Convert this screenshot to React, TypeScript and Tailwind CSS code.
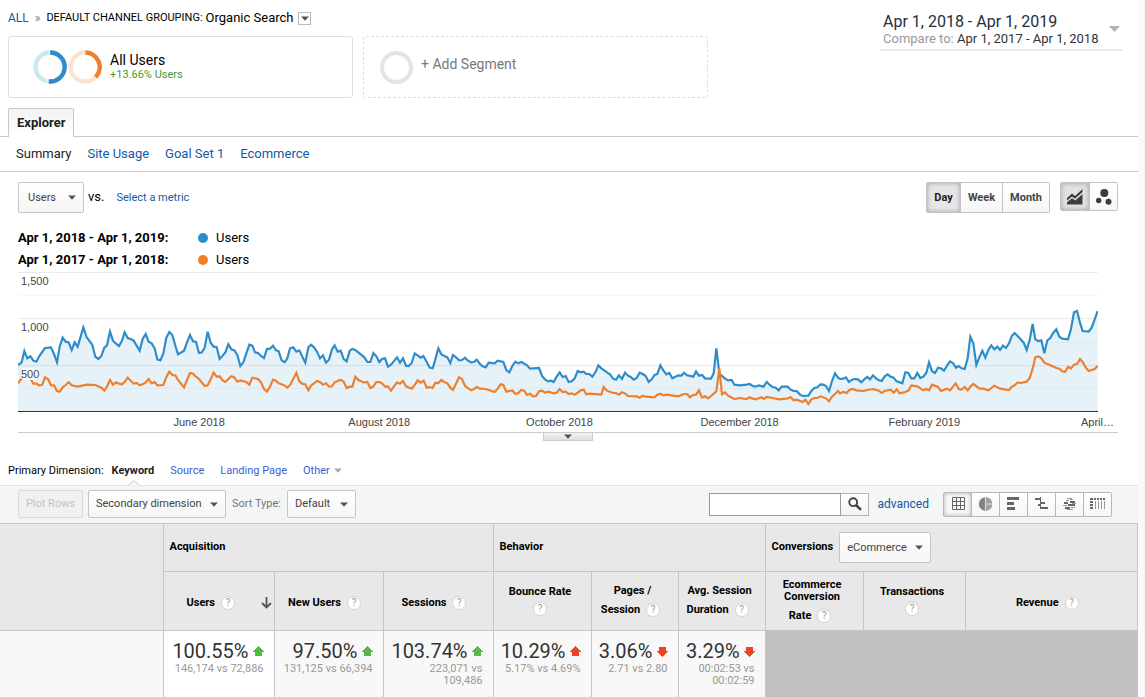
import type { ReactNode } from "react";

type Segment = { dx: number; dy: number; points: string };

/* Coordinates are in thirds of a pixel; each segment is relative to its own origin. */
const currentYear: Segment[] = [
  {
    dx: 0,
    dy: 660,
    points:
      "54,435 65,427 73,393 82,415 91,409 100,422 109,425 118,408 135,384 153,382 162,402 171,427 179,380 188,353 197,365 206,367 215,390 224,367 233,380 242,350 250,322 260,352 268,362 277,375 286,410 295,417 304,408 313,383 321,376 330,335 339,362 348,371 357,378 366,362 374,337 383,354 392,357 401,362 410,377 419,392 428,357 437,342 446,365 455,370 464,385 472,418 481,421 490,400 499,353 508,336 517,345 526,377 534,403 552,392 561,367 570,345 579,364 588,366 597,399 606,397 614,383 623,335 632,368 641,380 650,381 659,417 668,407 676,397 685,373 694,388 703,391 712,405 721,438 730,427 739,400 748,374 757,377 765,397 774,399 783,408 792,414 801,387 810,386 819,377 828,391 836,394 845,421 854,427 862,415",
  },
  {
    dx: 840,
    dy: 780,
    points:
      "30,265 40,262 49,275 58,271 67,290 76,308 85,262 93,254 102,262 111,275 120,295 129,286 138,308 147,299 156,268 164,256 173,275 182,272 191,297 200,304 209,273 217,267 226,270 235,277 253,292 262,306 271,306 280,279 289,289 298,306 306,297 315,295 324,320 333,314 351,292 360,308 369,295 378,317 386,318 395,309 404,280 413,286 422,293 430,288 440,305 449,323 458,325 466,298 475,265 484,283 493,288 502,292 511,309 519,285 528,292 537,301 546,300 555,293 564,302 573,307 582,306 590,299 600,312 608,319 617,322 626,308 644,310 653,302 670,306 679,330 688,337 697,318 706,305 715,310 724,306 741,316 750,326 777,324 786,348 795,358 804,364 813,362 821,366 830,350 839,337 848,351 857,348",
  },
  {
    dx: 1680,
    dy: 780,
    points:
      "26,366 35,364 44,355 53,333 62,337 71,335 79,342 88,342 97,350 106,337 115,316 124,325 133,331 142,338 150,343 159,356 168,359 177,346 186,357 195,338 204,347 212,351 221,359 230,354 239,338 248,342 257,348 266,366 275,358 284,345 292,342 301,316 310,331 319,343 328,339 337,355 355,346 364,347 372,338 381,346 400,350 408,334 417,347 426,345 435,355 453,356 461,340 469,265 478,340 486,348 495,356 504,361 515,360 523,374 540,376 560,374 569,372 578,378 587,380 596,376 611,380 620,366 629,375 638,381 647,383 656,391 665,380 683,380 692,389 701,393 710,393 719,403 728,408 745,407 754,393 763,384 772,382 781,373 790,374 798,378 807,393 816,363 825,340 834,353",
  },
  {
    dx: 2520,
    dy: 780,
    points:
      "0,357 10,356 18,352 27,366 36,359 45,357 54,358 64,367 73,358 82,351 90,358 99,346 108,355 117,361 125,363 134,349 143,343 152,350 161,353 170,364 187,370 196,337 205,339 214,355 223,355 232,339 241,354 250,350 259,338 267,307 276,334 285,339 294,323 303,325 312,332 321,317 330,304 339,309 348,323 356,318 365,325 374,327 383,295 391,230 400,250 409,315 418,292 427,272 436,293 445,270 454,256 463,268 472,260 480,270 489,257 498,264 507,250 516,227 524,219 542,238 551,248 560,270 569,240 578,192 586,238 595,243 604,241 613,280 622,241 631,234 640,218 649,208 658,230 667,236 684,238 693,207 702,157 711,153 720,188 728,213 746,215 755,203 764,178 773,153",
  },
];

const previousYear: Segment[] = [
  {
    dx: 0,
    dy: 660,
    points:
      "54,490 65,475 73,462 82,460 91,475 100,491 109,491 118,497 127,494 135,472 144,477 153,496 162,496 171,513 179,515 188,502 197,495 206,487 215,496 233,500 260,494 286,495 304,503 313,512 321,500 330,480 339,494 348,487 357,491 366,493 374,485 383,473 401,491 410,489 419,496 428,493 437,487 446,477 455,490 464,486 472,496 490,495 499,471 508,455 517,465 526,466 534,480 552,502 561,480 570,459 579,461 588,470 597,477 614,498 623,496 632,478 641,458 650,470 659,469 668,481 676,486 694,469 703,472 712,485 721,481 739,486 748,494 757,473 774,477 783,487 792,507 801,515 810,500 819,479 828,482 836,490",
  },
  {
    dx: 840,
    dy: 780,
    points:
      "0,371 13,376 22,383 31,374 40,356 49,338 58,364 67,371 76,373 85,391 93,377 111,363 120,366 129,374 138,370 147,380 156,379 164,367 182,359 191,365 200,384 209,380 217,380 226,350 235,360 253,368 262,366 271,384 280,380 289,366 298,366 306,370 315,380 324,379 333,392 342,379 351,367 360,371 369,363 378,379 395,386 404,375 413,361 422,368 431,362 440,383 449,381 458,384 466,368 475,369 484,360 493,366 502,370 511,383 519,390 537,352 546,357 555,378 573,391 582,387 590,381 600,386 617,387 644,396 653,386 662,373 670,375 679,395 697,391 706,402 715,399 724,390 733,393 741,405 750,401 759,409 768,408 777,394 786,392 795,398 804,395 821,400 830,398 839,387 848,396 857,395",
  },
  {
    dx: 1680,
    dy: 780,
    points:
      "26,402 35,400 44,404 53,398 62,391 71,389 79,403 88,401 124,404 131,381 141,392 159,399 168,399 177,404 186,397 195,400 204,408 230,409 239,413 248,407 257,410 284,412 292,404 301,401 310,406 319,404 355,409 372,402 381,402 390,412 399,405 408,404 417,391 426,413 435,409 444,415 453,408 469,394 478,325 486,403 495,397 504,407 523,417 540,414 560,417 569,412 578,416 587,418 605,412 611,417 620,411 638,414 656,418 683,415 692,412 701,421 710,419 728,426 736,419 745,432 754,418 763,414 772,414 781,409 798,415 807,424 816,410 834,393",
  },
  {
    dx: 2520,
    dy: 780,
    points:
      "0,400 10,396 20,399 28,390 37,387 54,392 72,393 81,390 99,387 117,392 125,399 134,393 152,389 161,398 170,388 179,400 196,396 206,391 214,376 232,379 250,391 259,387 267,391 276,374 294,381 303,393 321,386 330,391 347,370 356,387 365,389 374,381 383,391 392,379 400,372 418,386 430,386 445,391 463,377 480,386 507,390 516,380 524,376 533,367 542,369 560,365 569,354 578,326 586,292 595,289 604,295 613,308 631,316 649,324 658,326 667,334 675,336 684,321 693,325 702,314 711,312 720,297 728,306 737,322 746,333 755,330 764,327 773,317",
  },
];

const joinSegments = (segments: Segment[]) =>
  segments
    .flatMap(({ dx, dy, points }) =>
      points.split(" ").map((pair) => {
        const [x, y] = pair.split(",").map(Number);
        return `${x + dx},${y + dy}`;
      }),
    )
    .join(" ");

const currentLine = joinSegments(currentYear);
const previousLine = joinSegments(previousYear);

function Caret({ className = "text-[#555]" }: { className?: string }) {
  return (
    <svg width="8" height="5" viewBox="0 0 8 5" className={className} aria-hidden="true">
      <path d="M0 0.5h8L4 4.8z" fill="currentColor" />
    </svg>
  );
}

function DropDown({ label, value, className }: { label: string; value: string; className: string }) {
  return (
    <div className={`relative ${className}`}>
      <select
        aria-label={label}
        className="h-full w-full appearance-none rounded-[2px] border border-[#c6c6c6] bg-gradient-to-b from-white to-[#f5f5f5] pr-5 text-[11px] text-[#444] outline-none"
      >
        <option>{value}</option>
      </select>
      <span className="pointer-events-none absolute inset-y-0 right-2 flex items-center">
        <Caret />
      </span>
    </div>
  );
}

function Help() {
  return (
    <button
      type="button"
      aria-label="Help"
      className="inline-flex size-[14px] shrink-0 items-center justify-center rounded-full border border-[#d4d4d4] bg-white text-[10px] leading-[12px] font-normal text-[#999]"
    >
      ?
    </button>
  );
}

function TrendArrow({ down, good }: { down?: boolean; good?: boolean }) {
  return (
    <svg
      width="11"
      height="11"
      viewBox="0 0 11 11"
      shapeRendering="crispEdges"
      className={good ? "text-[#56b947]" : "text-[#ef4423]"}
      aria-hidden="true"
    >
      <path
        d={down ? "M5.5 11L0 6V5H2V1H9V5H11V6z" : "M5.5 0L0 5V6H2V10H9V6H11V5z"}
        fill="currentColor"
      />
    </svg>
  );
}

function ViewButton({ label, active, children }: { label: string; active?: boolean; children: ReactNode }) {
  return (
    <button
      type="button"
      aria-label={label}
      className={`flex h-full w-7 items-center justify-center border-l border-[#b8b8b8] first:w-[27px] first:border-l-0 ${
        active ? "bg-[#f8f8f8] shadow-[inset_0_0_4px_rgba(0,0,0,0.3)]" : "bg-gradient-to-b from-white to-[#f6f6f6]"
      }`}
    >
      <svg width="16" height="14" viewBox="0 0 16 14" className="text-[#666]" fill="currentColor" aria-hidden="true">
        {children}
      </svg>
    </button>
  );
}

function Chart() {
  return (
    <div className="mx-[18px] mr-5">
      <div className="relative mr-5 h-[140px]">
        <svg
          className="block h-full w-full"
          viewBox="54 816 3240 420"
          preserveAspectRatio="none"
          role="img"
          aria-label="Users per day"
        >
          <g fill="#ebebeb">
            <rect x="54" y="816" width="3240" height="3" />
            <rect x="54" y="954" width="3240" height="3" />
            <rect x="54" y="1095" width="3240" height="3" />
          </g>
          <g fill="#f7f7f7">
            <rect x="54" y="885" width="3240" height="3" />
            <rect x="54" y="1026" width="3240" height="3" />
            <rect x="54" y="1164" width="3240" height="3" />
          </g>
          <polygon points={`54,1233 ${currentLine} 3293,1233`} fill="#0a83bd" fillOpacity="0.1" />
          <polyline points={currentLine} fill="none" stroke="#2d8cc9" strokeWidth="6.5" />
          <polyline points={previousLine} fill="none" stroke="#ee7f2d" strokeWidth="6.5" />
          <rect x="54" y="1233" width="3240" height="3" fill="#333" />
        </svg>
        <div className="absolute inset-y-0 left-[3px] font-['Liberation_Sans',sans-serif] text-[11px] leading-[12px] text-[#444] [text-shadow:0_0_2px_#fff,0_0_2px_#fff]">
          <div className="absolute top-[3px]">1,500</div>
          <div className="absolute top-[49px]">1,000</div>
          <div className="absolute top-[96px] rounded-sm bg-white/80">500</div>
        </div>
      </div>
      <div className="grid grid-cols-[20fr_20fr_20fr_20fr_21fr_11fr] border-b border-[#ccc] pl-[91px] text-center font-['Liberation_Sans',sans-serif] text-[11px] leading-[20px] text-[#444]">
        <span>June 2018</span>
        <span>August 2018</span>
        <span>October 2018</span>
        <span>December 2018</span>
        <span>February 2019</span>
        <span className="pr-1 text-right">April…</span>
      </div>
      <button
        type="button"
        aria-label="Collapse chart"
        className="mx-auto flex h-2 w-[50px] items-center justify-center border border-t-0 border-[#ccc] bg-gradient-to-b from-[#f2f2f2] to-[#ddd]"
      >
        <Caret />
      </button>
    </div>
  );
}

const th = "border border-[#c6c6c6] align-middle font-bold";

function Metric({ value, note, down, good, white }: { value: string; note: ReactNode; down?: boolean; good?: boolean; white?: boolean }) {
  return (
    <td className={`border-x border-[#c6c6c6] pt-[9px] pr-[10px] text-right align-top ${white ? "bg-white" : "bg-[#f8f8f8]"}`}>
      <div className="flex items-center justify-end gap-1 text-[20px] leading-[23px] whitespace-nowrap text-[#333]">
        {value}
        <TrendArrow down={down} good={good} />
      </div>
      <div className="text-[11px] leading-[12px] text-[#999]">{note}</div>
    </td>
  );
}

export default function App() {
  return (
    <div className="min-h-screen bg-[#f8faf9] pr-[7px] font-[Roboto,sans-serif] text-black">
      <main className="min-h-screen bg-white">
        <header className="flex items-start justify-between pl-2">
          <div>
            <nav className="flex h-9 items-center text-[11px]" aria-label="Breadcrumb">
              <a href="#all" className="text-[12px] text-[#15599f]">ALL</a>
              <span className="mx-[6px] text-[12px] text-[#777]">»</span>
              <span>DEFAULT CHANNEL GROUPING:</span>
              <span className="ml-[3px] text-[13px]">Organic Search</span>
              <button type="button" aria-label="Change channel" className="ml-[5px] flex size-[13px] items-center justify-center border border-[#bbb]">
                <Caret />
              </button>
            </nav>
            <div className="flex gap-[10px]">
              <section className="flex h-[62px] w-[345px] items-center rounded-[3px] border border-[#e0e0e0] pl-6">
                <svg width="69" height="34" viewBox="0 0 69 34" fill="none" strokeWidth="4.4" aria-hidden="true">
                  <circle cx="17" cy="17" r="14.5" stroke="#cde6f4" />
                  <path d="M17 2.5A14.5 14.5 0 1 1 15.5 31.4" stroke="#2d8cc9" />
                  <path d="M16.6 0V5M15 29V34" stroke="#fff" strokeWidth="1" />
                  <circle cx="52" cy="17" r="14.5" stroke="#fce3d0" />
                  <path d="M52.5 2.5A14.5 14.5 0 0 1 62.7 27" stroke="#ee7f2d" />
                </svg>
                <div className="ml-2 pb-px">
                  <h2 className="text-[14px] leading-[16px]">All Users</h2>
                  <p className="text-[11px] leading-[14px] text-[#449a2f]">+13.66% Users</p>
                </div>
              </section>
              <button type="button" className="flex h-[62px] w-[345px] items-center gap-2 rounded-[3px] border border-dashed border-[#dedede] pl-4 text-[14px] text-[#777]">
                <span className="size-[33px] rounded-full border-4 border-[#e4e4e4]" />
                <span className="pb-[6px]">+ Add Segment</span>
              </button>
            </div>
          </div>
          <button type="button" className="mt-3 mr-4 flex w-[242px] items-center justify-between border-b-2 border-[#ebebeb] pr-[2px] pb-[3px] pl-[3px] text-left">
            <span>
              <span className="block text-[16px] leading-[19px] text-[#1f2f40]">Apr 1, 2018 - Apr 1, 2019</span>
              <span className="block text-[13px] leading-[15px] text-[#333]">
                <span className="text-[#999]">Compare to:</span> Apr 1, 2017 - Apr 1, 2018
              </span>
            </span>
            <svg width="11" height="6" viewBox="0 0 11 6" aria-hidden="true">
              <path d="M0 0h11L5.5 6z" fill="#b3b3b3" />
            </svg>
          </button>
        </header>

        <div className="mt-[10px] flex border-b border-[#c9c9c9] pl-2">
          <button type="button" className="-mb-px h-[29px] rounded-t-[2px] border border-b-0 border-[#c9c9c9] bg-gradient-to-b from-[#f3f3f3] to-white px-2 text-[13px] font-bold text-[#222]">
            Explorer
          </button>
        </div>
        <nav className="flex h-[35px] items-center gap-4 border-b border-[#c9c9c9] px-4 text-[13px] text-[#15599f]" aria-label="Explorer views">
          <span className="text-[#222]">Summary</span>
          <a href="#usage">Site Usage</a>
          <a href="#goals">Goal Set 1</a>
          <a href="#ecommerce">Ecommerce</a>
        </nav>

        <div className="flex items-center justify-between pt-[10px] pr-5 pl-[18px]">
          <div className="flex items-center">
            <DropDown label="Metric" value="Users" className="h-[31px] w-[66px] [&>select]:pt-px [&>select]:pl-[9px]" />
            <span className="ml-1 pb-[2px] text-[13px]">vs.</span>
            <a href="#metric" className="ml-3 pt-px text-[11px] text-[#15599f]">Select a metric</a>
          </div>
          <div className="flex items-start gap-[10px]">
            <div className="flex h-[31px] overflow-hidden rounded-[2px] border border-[#c3c3c3] text-[11px] font-bold text-[#444]">
              <button type="button" className="w-[33px] bg-[#e6e6e6] pt-px text-[#222] shadow-[inset_0_0_5px_rgba(0,0,0,0.3)]">Day</button>
              <button type="button" className="w-[42px] border-l border-[#c3c3c3] bg-gradient-to-b from-white to-[#f6f6f6] pt-px">Week</button>
              <button type="button" className="w-[47px] border-l border-[#c3c3c3] bg-gradient-to-b from-white to-[#f6f6f6] pt-px">Month</button>
            </div>
            <div className="flex h-[29px] overflow-hidden rounded-[2px] border border-[#c3c3c3]">
              <button type="button" aria-label="Line chart" className="flex w-7 items-center justify-center bg-[#e2e2e2] shadow-[inset_0_0_5px_rgba(0,0,0,0.3)]">
                <svg width="16" height="16" viewBox="0 0 16 16" aria-hidden="true">
                  <path d="M0 9L5 4.5L8 7L15.5 0V3L8 9.8L5 7.5L0 11.5z" fill="#3c3c3c" />
                  <path d="M0 13.2L5 9.3L8.3 11.5L15.5 5V15.5H0z" fill="#3c3c3c" />
                </svg>
              </button>
              <button type="button" aria-label="Motion chart" className="flex w-7 items-center justify-center border-l border-[#c3c3c3] bg-gradient-to-b from-white to-[#f6f6f6]">
                <svg width="16" height="16" viewBox="0 0 16 16" fill="#3c3c3c" aria-hidden="true">
                  <circle cx="8.3" cy="4" r="4" />
                  <circle cx="2.7" cy="11.5" r="2.7" />
                  <circle cx="12.5" cy="12.7" r="3" />
                </svg>
              </button>
            </div>
          </div>
        </div>

        <div className="mt-[14px] mb-[1px] grid grid-cols-[180px_1fr] pl-[18px] text-[13px] leading-[22px]">
          <b>Apr 1, 2018 - Apr 1, 2019:</b>
          <span className="flex items-center gap-2"><i className="size-[10px] rounded-full bg-[#2d8cc9]" />Users</span>
          <b>Apr 1, 2017 - Apr 1, 2018:</b>
          <span className="flex items-center gap-2"><i className="size-[10px] rounded-full bg-[#ee7f2d]" />Users</span>
        </div>

        <Chart />

        <div className="flex h-[44px] items-end pl-2 text-[11px] text-[#3a61d1]">
          <span className="pb-[6px] text-black">Primary Dimension:</span>
          <span className="relative ml-2 pb-[6px] font-bold text-[#222]">
            Keyword
            <svg width="12" height="6" viewBox="0 0 12 6" className="absolute -bottom-px left-4" aria-hidden="true">
              <path d="M0.5 5.5L6 0.5L11.5 5.5" fill="#f5f7f6" stroke="#ccc" />
            </svg>
          </span>
          <a href="#source" className="ml-4 pb-[6px]">Source</a>
          <a href="#landing" className="ml-4 pb-[6px]">Landing Page</a>
          <a href="#other" className="ml-4 flex items-center gap-1 pb-[6px]">Other <Caret className="text-[#aaa]" /></a>
        </div>

        <div className="flex h-[38px] items-start justify-between border-t border-[#e3e3e3] bg-[#f4f6f5] pt-1 pr-[26px] pl-[18px] text-[11px]">
          <div className="flex items-center">
            <button type="button" disabled className="h-7 w-[65px] rounded-[2px] border border-[#dadada] bg-[#f1f1f1] pt-px text-[#c3c3c3]">Plot Rows</button>
            <DropDown label="Secondary dimension" value="Secondary dimension" className="ml-[5px] h-7 w-[138px] [&>select]:pl-[7px]" />
            <span className="ml-[6px] text-[#777]">Sort Type:</span>
            <DropDown label="Sort type" value="Default" className="ml-[6px] h-7 w-[69px] [&>select]:pl-[7px]" />
          </div>
          <div className="flex h-7 items-center">
            <input type="search" aria-label="Search keywords" className="h-[23px] w-[132px] appearance-none border border-[#999] bg-white px-1 outline-none" />
            <button type="button" aria-label="Search" className="flex h-[23px] w-7 items-center justify-center border border-l-0 border-[#b5b5b5] bg-gradient-to-b from-white to-[#f3f3f3]">
              <svg width="14" height="14" viewBox="0 0 14 14" fill="none" stroke="#444" aria-hidden="true">
                <circle cx="5.2" cy="5.2" r="3.9" strokeWidth="1.9" />
                <path d="M8 8L13 12.8" strokeWidth="2.5" />
              </svg>
            </button>
            <a href="#advanced" className="ml-2 text-[12px] text-[#15599f]">advanced</a>
            <div className="ml-[14px] flex h-[25px] overflow-hidden rounded-[2px] border border-[#b8b8b8]">
              <ViewButton label="Table" active>
                <path d="M2.5 0.5h12v12h-12zM2.5 4.5h12M2.5 8.5h12M6.5 0.5v12M10.5 0.5v12" fill="none" stroke="currentColor" />
              </ViewButton>
              <ViewButton label="Percentage">
                <circle cx="7.5" cy="7" r="6.7" fill="#828282" />
                <path d="M7.5 7V0.3A6.7 6.7 0 0 1 7.5 13.7z" fill="#a0a0a0" />
                <path d="M7.5 0V14M7.5 7h7" fill="none" stroke="#dedede" />
              </ViewButton>
              <ViewButton label="Performance">
                <path d="M1 0h12v3H1zM1 5h7v3H1zM1 10h8v3H1z" />
              </ViewButton>
              <ViewButton label="Comparison">
                <path d="M1 1h5v2H1zM6 0h1v12H6zM7 5h4v2H7zM4 7h2v2H4zM7 10h7v2H7z" />
              </ViewButton>
              <ViewButton label="Term cloud">
                <path d="M2 5h4v2H2zM8 4h5v2H8zM6 7h7v2H6zM3 10h5v2H3z" />
                <path d="M5 1h5v1H5zM4 3h3v1H4zM8 2h3v1H8zM1 8h4v1H1zM9 10h4v1H9zM5 12h6v1H5zM10 6h4v1h-4z" fill="#999" />
              </ViewButton>
              <ViewButton label="Pivot">
                <path d="M0 1h3v2H0zM4 1h2v2H4zM7 1h2v2H7zM10 1h2v2h-2zM13 1h2v2h-2zM0 4h3v2H0zM0 7h3v2H0zM0 10h3v2H0z" />
                <path d="M5 4h1v8H5zM8 4h1v8H8zM11 4h1v8h-1zM14 4h1v8h-1z" fill="#999" />
              </ViewButton>
            </div>
          </div>
        </div>

        <table className="w-full table-fixed border-collapse border-r border-[#c6c6c6] text-[11px]">
          <colgroup>
            <col className="w-[163px]" />
            <col className="w-[111px]" />
            <col className="w-[109px]" />
            <col className="w-[110px]" />
            <col className="w-[98px]" />
            <col className="w-[87px]" />
            <col className="w-[87px]" />
            <col className="w-[98px]" />
            <col className="w-[102px]" />
            <col />
          </colgroup>
          <thead className="bg-[#e8e8e8]">
            <tr className="h-12">
              <th rowSpan={2} className={`${th} border-l-0`} aria-label="Keyword" />
              <th colSpan={3} className={`${th} px-[6px] text-left`}>Acquisition</th>
              <th colSpan={3} className={`${th} px-[6px] text-left`}>Behavior</th>
              <th colSpan={3} className={`${th} px-[6px] text-left`}>
                <div className="flex items-center gap-[6px]">
                  Conversions
                  <DropDown label="Conversions" value="eCommerce" className="h-[31px] w-[92px] font-normal [&>select]:pt-px [&>select]:pl-[7px]" />
                </div>
              </th>
            </tr>
            <tr className="h-[59px] leading-[12px]">
              <th className={th}>
                <div className="flex items-center pt-1 pl-[23px]">
                  Users
                  <span className="ml-[6px] flex"><Help /></span>
                  <svg width="11" height="12" viewBox="0 0 11 12" className="mr-[2px] ml-auto" fill="none" stroke="#555" strokeWidth="1.8" aria-label="Sorted descending">
                    <path d="M5.5 0V10M1 6L5.5 10.5L10 6" />
                  </svg>
                </div>
              </th>
              <th className={th}>
                <div className="flex items-center justify-center gap-[6px] pt-1 pr-2">New Users <Help /></div>
              </th>
              <th className={th}>
                <div className="flex items-center justify-center gap-[6px] pt-1 pr-2">Sessions <Help /></div>
              </th>
              <th className={th}>
                <div className="flex flex-col items-center gap-1 pr-1">Bounce Rate <Help /></div>
              </th>
              <th className={th}>
                <div className="pr-1 pb-[2px]">Pages /</div>
                <div className="flex items-center justify-center gap-[6px] pt-1 pr-2">Session <Help /></div>
              </th>
              <th className={th}>
                <div className="pr-1 pb-[2px]">Avg. Session</div>
                <div className="flex items-center justify-center gap-[6px] pt-1 pr-2">Duration <Help /></div>
              </th>
              <th className={th}>
                <div className="pr-1">Ecommerce<br />Conversion</div>
                <div className="flex items-center justify-center gap-[6px] pt-[6px] pr-2">Rate <Help /></div>
              </th>
              <th className={th}>
                <div className="flex flex-col items-center gap-1 pr-1">Transactions <Help /></div>
              </th>
              <th className={th}>
                <div className="flex items-center justify-center gap-[6px] pt-1 pr-2">Revenue <Help /></div>
              </th>
            </tr>
          </thead>
          <tbody>
            <tr className="h-[67px]">
              <td className="bg-[#f8f8f8]" />
              <Metric white good value="100.55%" note="146,174 vs 72,886" />
              <Metric good value="97.50%" note="131,125 vs 66,394" />
              <Metric good value="103.74%" note={<>223,071 vs<br />109,486</>} />
              <Metric value="10.29%" note="5.17% vs 4.69%" />
              <Metric down value="3.06%" note="2.71 vs 2.80" />
              <Metric down value="3.29%" note={<>00:02:53 vs<br />00:02:59</>} />
              <td colSpan={3} className="bg-[#c0c0c0]" />
            </tr>
          </tbody>
        </table>
      </main>
    </div>
  );
}
